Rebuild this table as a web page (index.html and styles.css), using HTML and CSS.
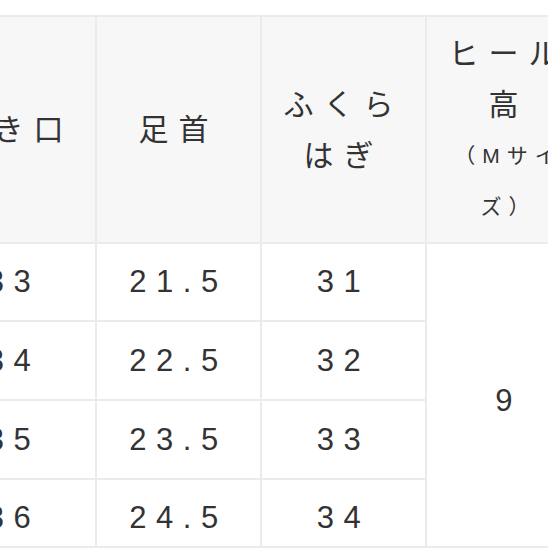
FILE: index.html
```html
<!DOCTYPE html>
<html lang="ja">
<head>
<meta charset="utf-8">
<link rel="stylesheet" href="styles.css">
</head>
<body>
<div class="wrap">
<table class="size-table">
  <thead>
    <tr class="head-row">
      <th>履き口</th>
      <th>足首</th>
      <th>ふくら<br>はぎ</th>
      <th>ヒール高<span class="note">（Mサイズ）</span></th>
    </tr>
  </thead>
  <tbody>
    <tr class="row">
      <td>33</td>
      <td>21.5</td>
      <td>31</td>
      <td rowspan="4" class="merged">9</td>
    </tr>
    <tr class="row">
      <td>34</td>
      <td>22.5</td>
      <td>32</td>
    </tr>
    <tr class="row">
      <td>35</td>
      <td>23.5</td>
      <td>33</td>
    </tr>
    <tr class="row last">
      <td>36</td>
      <td>24.5</td>
      <td>34</td>
    </tr>
  </tbody>
</table>
</div>
</body>
</html>
```
FILE: styles.css
```css
html, body {
  margin: 0;
  padding: 0;
  background: #ffffff;
}
body {
  width: 548px;
  height: 548px;
  overflow: hidden;
}
.wrap {
  padding-top: 15px;
  width: 548px;
  overflow: hidden;
}
.size-table {
  margin-left: -70px;
  width: 662px;
  table-layout: fixed;
  border-collapse: collapse;
  color: #333333;
  font-family: "Liberation Sans", "Noto Sans CJK JP", sans-serif;
}
.size-table th,
.size-table td {
  border: 2px solid #ebebeb;
  text-align: center;
  vertical-align: middle;
  padding: 0 8px;
  letter-spacing: 10px;
}
.size-table th {
  background: #f7f7f7;
  font-weight: normal;
  font-size: 30px;
  line-height: 51px;
  height: 227px;
  box-sizing: border-box;
}
.note {
  display: block;
  font-size: 21px;
  letter-spacing: 7px;
}
.size-table td {
  font-size: 31px;
  letter-spacing: 9.5px;
  line-height: 34px;
  height: 79px;
  box-sizing: border-box;
  background: #ffffff;
}
.row:first-child td {
  height: 78px;
}
.row:first-child td.merged {
  padding-top: 12px;
}
.row.last td {
  height: 68px;
  padding-top: 10px;
}
```
